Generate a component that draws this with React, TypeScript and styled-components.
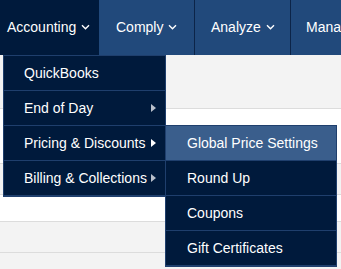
import React from "react";
import styled, { createGlobalStyle } from "styled-components";

const GlobalStyle = createGlobalStyle`
  html, body {
    margin: 0;
    padding: 0;
    background: #ffffff;
    font-family: "Liberation Sans", Arial, sans-serif;
  }
`;

const Page = styled.div`
  position: relative;
  width: 100%;
  height: 269px;
  overflow: hidden;
  background: #ffffff;
`;

const NavBar = styled.nav`
  display: flex;
  height: 55px;
  background: #21497b;
  white-space: nowrap;
`;

const NavItem = styled.div<{ $active?: boolean; $pl: number; $w?: number; $divider?: boolean }>`
  position: relative;
  display: flex;
  align-items: center;
  gap: 5px;
  box-sizing: border-box;
  flex: 0 0 auto;
  width: ${({ $w }) => ($w ? `${$w}px` : "auto")};
  height: 55px;
  padding: 0 0 2px ${({ $pl }) => $pl}px;
  background: ${({ $active }) => ($active ? "#001a3c" : "transparent")};
  border-right: ${({ $divider }) => ($divider ? "1px solid #0c2448" : "none")};
  color: #ffffff;
  font-size: 14px;
`;

const Dropdown = styled.ul`
  position: absolute;
  top: 55px;
  left: 3px;
  width: 163px;
  box-sizing: border-box;
  margin: 0;
  padding: 0;
  list-style: none;
  background: #001a3c;
  border: 1px solid #1f3f6d;
  border-bottom-width: 2px;
  z-index: 10;
`;

const SubMenu = styled(Dropdown)`
  top: -1px;
  left: 100%;
  width: 172px;
`;

const MenuRow = styled.li<{ $highlight?: boolean; $pl: number }>`
  position: relative;
  display: flex;
  align-items: center;
  justify-content: space-between;
  height: 34px;
  padding: 0 9px 0 ${({ $pl }) => $pl}px;
  background: ${({ $highlight }) => ($highlight ? "#3a5e8c" : "transparent")};
  border-bottom: 1px solid #1f3f6d;
  color: #ffffff;
  font-size: 14px;

  &:last-child {
    border-bottom: none;
  }
`;

const Caret = styled.span<{ $on?: boolean }>`
  width: 0;
  height: 0;
  border-top: 4px solid transparent;
  border-bottom: 4px solid transparent;
  border-left: 5px solid ${({ $on }) => ($on ? "#ffffff" : "#b9c0cb")};
`;

const Rows = styled.div`
  display: flex;
  flex-direction: column;
`;

const Row = styled.div<{ $h: number; $gray?: boolean }>`
  height: ${({ $h }) => $h}px;
  background: ${({ $gray }) => ($gray ? "#f3f3f3" : "#ffffff")};
  border-bottom: 1px solid #dcdcdc;
  flex: 0 0 auto;
`;

const Chevron = () => (
  <svg width="9" height="6" viewBox="0 0 9 6" fill="none">
    <path d="M1 1.2 L4.5 4.7 L8 1.2" stroke="#ffffff" strokeWidth="1.4" />
  </svg>
);

const rows = [
  { h: 53, gray: true },
  { h: 54, gray: false },
  { h: 30, gray: true },
  { h: 26, gray: false },
  { h: 30, gray: true },
  { h: 30, gray: true },
];

const subItems = ["Global Price Settings", "Round Up", "Coupons", "Gift Certificates"];

export default function App() {
  return (
    <>
      <GlobalStyle />
      <Page>
        <NavBar>
          <NavItem $active $pl={7} $w={99}>
            Accounting <Chevron />
            <Dropdown>
              <MenuRow $pl={20}>QuickBooks</MenuRow>
              <MenuRow $pl={20}>
                End of Day <Caret />
              </MenuRow>
              <MenuRow $pl={20}>
                Pricing &amp; Discounts <Caret $on />
                <SubMenu>
                  {subItems.map((label, i) => (
                    <MenuRow key={label} $pl={21} $highlight={i === 0}>
                      {label}
                    </MenuRow>
                  ))}
                </SubMenu>
              </MenuRow>
              <MenuRow $pl={20}>
                Billing &amp; Collections <Caret />
              </MenuRow>
            </Dropdown>
          </NavItem>
          <NavItem $pl={17} $w={96} $divider>
            Comply <Chevron />
          </NavItem>
          <NavItem $pl={16} $w={96} $divider>
            Analyze <Chevron />
          </NavItem>
          <NavItem $pl={15}>
            Manage <Chevron />
          </NavItem>
        </NavBar>
        <Rows>
          {rows.map((r, i) => (
            <Row key={i} $h={r.h} $gray={r.gray} />
          ))}
        </Rows>
      </Page>
    </>
  );
}
